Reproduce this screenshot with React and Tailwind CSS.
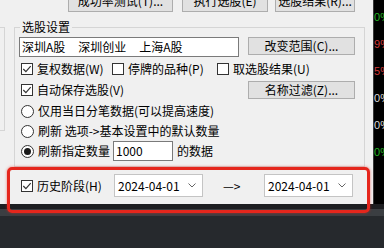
import React from "react";

const Check = ({ checked }) => (
  <span className="w-[12px] h-[12px] border border-[#333] bg-white flex items-center justify-center shrink-0">
    {checked && (
      <svg width="10" height="10" viewBox="0 0 10 10">
        <path d="M1.3 5 L3.9 7.6 L8.7 2.2" fill="none" stroke="#333" strokeWidth="1.2" />
      </svg>
    )}
  </span>
);

const Radio = ({ checked }) => (
  <span className="w-[13px] h-[13px] rounded-full border border-[#333] bg-white flex items-center justify-center shrink-0">
    {checked && <span className="w-[7px] h-[7px] rounded-full bg-[#1a1a1a]" />}
  </span>
);

const Combo = ({ value }) => (
  <div className="w-[89px] h-[23px] border border-[#c4c4c4] bg-white flex items-center justify-between pl-[3px] pr-[6px]">
    <span>{value}</span>
    <svg width="8" height="5" viewBox="0 0 8 5">
      <path d="M0.5 0.5 L4 4 L7.5 0.5" fill="none" stroke="#666" strokeWidth="1" />
    </svg>
  </div>
);

const Btn = ({ children, w }) => (
  <div className={`${w} h-[18px] bg-[#e1e1e1] border border-[#adadad] flex items-center justify-center`}>
    {children}
  </div>
);

export default function App() {
  // the cut-off percentage column on the right edge
  const ticks = [
    { t: "10%", c: "text-[#22b422]" },
    { t: "19%", c: "text-[#d23a3a]" },
    { t: "15%", c: "text-[#d23a3a]" },
    { t: "00%", c: "text-[#d8d8d8]" },
    { t: "00%", c: "text-[#d8d8d8]" },
    { t: "10%", c: "text-[#22b422]" },
  ];

  return (
    <div className="relative w-[384px] h-[248px] overflow-hidden bg-[#26292d] flex flex-col font-['Noto_Sans_CJK_SC',sans-serif] text-[12px] leading-[14px] text-black">
      <div className="flex h-[204px] shrink-0">
        {/* dialog */}
        <div className="w-[373px] h-full bg-[#f0f0f0] flex flex-col">
          {/* top buttons, cut off */}
          <div className="flex mt-[-10px] h-[22px] shrink-0">
            <div className="ml-[68px] w-[105px] h-[22px] bg-[#e1e1e1] border border-[#adadad] flex items-center justify-center">
              成功率测试(T)...
            </div>
            <div className="ml-[9px] w-[86px] h-[22px] bg-[#e1e1e1] border border-[#adadad] flex items-center justify-center">
              执行选股(E)
            </div>
            <div className="ml-[7px] w-[80px] h-[22px] bg-[#e1e1e1] border border-[#adadad] flex items-center justify-center">
              选股结果(R)...
            </div>
          </div>

          <div className="flex items-start mt-[8px]">
            <div className="w-[5px] h-[104px] mt-[7px] border-t border-r border-b border-[#d5d5d5]" />
            <fieldset className="ml-[9px] w-[351px] h-[147px] border border-[#d5d5d5] px-[4px] pt-[3px]">
              <legend className="ml-[1px] px-[2px] leading-[14px]">选股设置</legend>

              <div className="flex h-[20px] mb-[2px]">
                <div className="w-[220px] h-[20px] border border-[#7a7a7a] bg-white flex items-center pl-[2px] gap-[13px]">
                  <span>深圳A股</span>
                  <span>深圳创业</span>
                  <span>上海A股</span>
                </div>
                <div className="ml-[9px]">
                  <Btn w="w-[107px]">改变范围(C)...</Btn>
                </div>
              </div>

              <div className="flex items-center h-[20px] pl-[2px]">
                <div className="w-[91px] flex items-center gap-[4px]">
                  <Check checked />
                  <span>复权数据(W)</span>
                </div>
                <div className="w-[105px] flex items-center gap-[4px]">
                  <Check />
                  <span>停牌的品种(P)</span>
                </div>
                <div className="flex items-center gap-[4px]">
                  <Check />
                  <span>取选股结果(U)</span>
                </div>
              </div>

              <div className="flex items-center h-[22px] pl-[2px]">
                <div className="w-[227px] flex items-center gap-[4px]">
                  <Check checked />
                  <span>自动保存选股(V)</span>
                </div>
                <Btn w="w-[107px]">名称过滤(Z)...</Btn>
              </div>

              <div className="flex items-center h-[20px] pl-[2px] gap-[4px]">
                <Radio />
                <span>仅用当日分笔数据(可以提高速度)</span>
              </div>

              <div className="flex items-center h-[20px] pl-[2px] gap-[4px]">
                <Radio />
                <span>刷新 选项-&gt;基本设置中的默认数量</span>
              </div>

              <div className="flex items-center h-[20px] pl-[2px]">
                <Radio checked />
                <span className="ml-[4px]">刷新指定数量</span>
                <div className="ml-[3px] w-[60px] h-[20px] border border-[#7a7a7a] bg-white flex items-center pl-[2px]">
                  1000
                </div>
                <span className="ml-[4px]">的数据</span>
              </div>
            </fieldset>
          </div>

          {/* history range row */}
          <div className="flex items-center h-[23px] mt-[7px] pl-[21px]">
            <Check checked />
            <span className="ml-[4px] w-[77px]">历史阶段(H)</span>
            <Combo value="2024-04-01" />
            <span className="ml-[20px] w-[41px]">—&gt;</span>
            <Combo value="2024-04-01" />
          </div>
        </div>

        {/* chart column behind the dialog */}
        <div className="w-[11px] h-full bg-black border-l border-[#3a3a3a] overflow-hidden flex flex-col pt-[10px] font-['Liberation_Sans',sans-serif] text-[11px] leading-[14px]">
          {ticks.map((k, i) => (
            <div key={i} className={`h-[27px] ml-[-6px] whitespace-nowrap ${k.c}`}>
              {k.t}
            </div>
          ))}
        </div>
      </div>

      <div className="h-[5px] bg-[#1d1e21] shrink-0" />
      <div className="h-[7px] bg-[#3b3e42] shrink-0" />

      {/* red highlight frame */}
      <div className="absolute left-[7px] top-[167px] w-[363px] h-[46px] border-[3px] border-[#e5261c] rounded-[5px] shadow-[0_0_3px_rgba(230,40,30,0.6)] pointer-events-none" />
    </div>
  );
}
